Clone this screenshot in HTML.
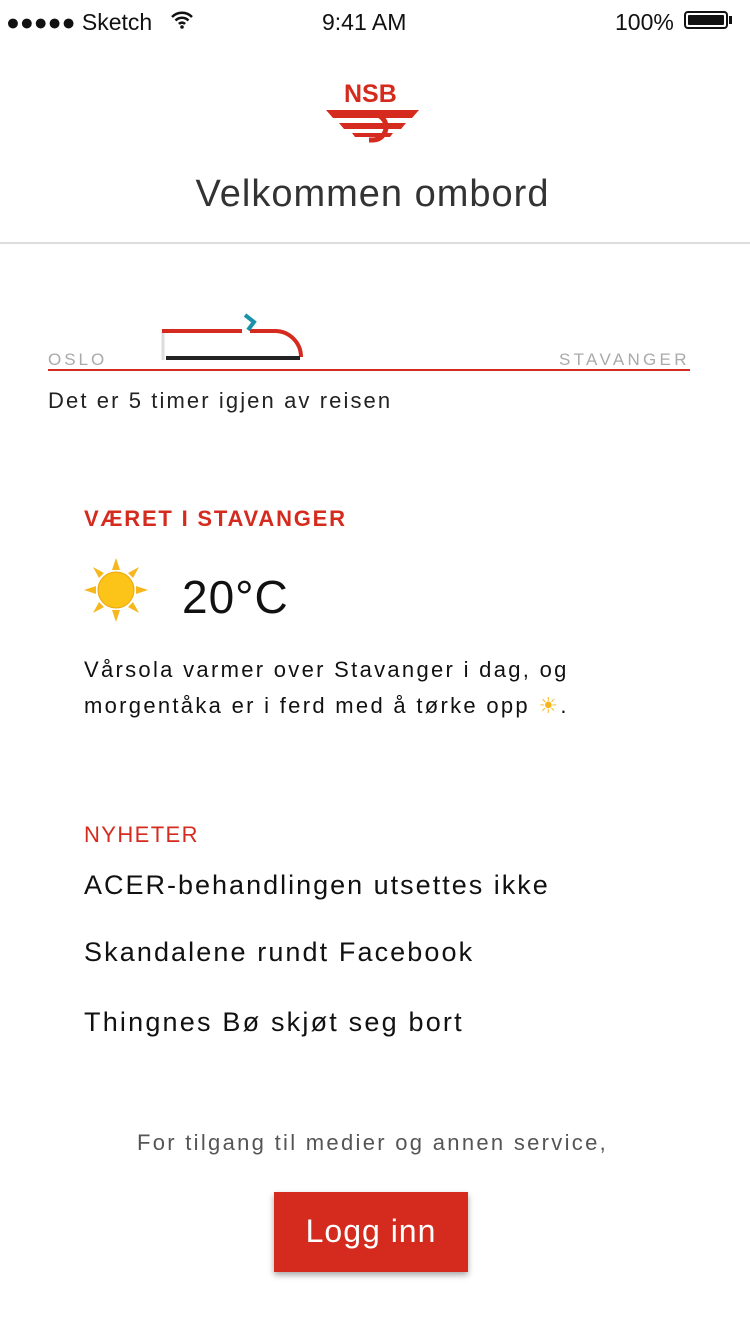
<!DOCTYPE html>
<html><head><meta charset="utf-8"><style>
body{margin:0;width:750px;height:1334px;background:#fff;font-family:"Liberation Sans",sans-serif;position:relative;overflow:hidden;color:#111}
.a{position:absolute;white-space:nowrap}
</style></head><body>
<div class="a" style="left:6px;top:9px;font-size:23px;">●●●●● Sketch</div>
<svg class="a" style="left:170px;top:10px" width="24" height="20" viewBox="0 0 24 20"><path d="M2 7a14 14 0 0 1 20 0M5.5 10.5a9 9 0 0 1 13 0M9 14a4 4 0 0 1 6 0" stroke="#111" stroke-width="2.5" fill="none"/><circle cx="12" cy="17" r="1.8" fill="#111"/></svg>
<div class="a" style="left:322px;top:9px;font-size:23px;">9:41 AM</div>
<div class="a" style="left:615px;top:9px;font-size:23px;">100%</div>
<div class="a" style="left:684px;top:11px;width:44px;height:18px;border:2px solid #111;border-radius:4px;box-sizing:border-box;padding:2px"><div style="background:#111;height:100%;border-radius:1px"></div></div>
<div class="a" style="left:729px;top:16px;width:3px;height:8px;background:#111"></div>

<div class="a" style="left:344px;top:80px;font-size:25px;font-weight:bold;color:#d52b1e">NSB</div>
<svg class="a" style="left:325px;top:108px" width="95" height="36" viewBox="0 0 95 36">
<path d="M1 2H94L87 10H8Z" fill="#d52b1e"/>
<path d="M14 15H81L76 21H19Z" fill="#d52b1e"/>
<path d="M27 25H68L65 29H30Z" fill="#d52b1e"/>
<path d="M40 6h8a13 13 0 0 1 0 26h-4" stroke="#d52b1e" stroke-width="5" fill="none"/>
</svg>
<div class="a" style="left:0;width:745px;text-align:center;top:173px;font-size:38px;color:#333;letter-spacing:1px">Velkommen ombord</div>
<div class="a" style="left:0;top:242px;width:750px;height:2px;background:#ddd"></div>

<svg class="a" style="left:150px;top:305px" width="170" height="65">
<path d="M13 25V55" stroke="#ddd" stroke-width="3"/>
<path d="M12 26H92" stroke="#d52b1e" stroke-width="4"/>
<path d="M100 26H125a26 26 0 0 1 26 26" stroke="#d52b1e" stroke-width="4" fill="none"/>
<path d="M16 53H150" stroke="#222" stroke-width="4"/>
<path d="M95 10L104 17L98 25" stroke="#1a93a8" stroke-width="4" fill="none"/>
</svg>
<div class="a" style="left:48px;top:350px;font-size:17px;color:#aaa;letter-spacing:3px">OSLO</div>
<div class="a" style="left:559px;top:350px;font-size:17px;color:#aaa;letter-spacing:3.3px">STAVANGER</div>
<div class="a" style="left:48px;top:369px;width:642px;height:2px;background:#d52b1e"></div>
<div class="a" style="left:48px;top:388px;font-size:22px;color:#222;letter-spacing:2.1px">Det er 5 timer igjen av reisen</div>

<div class="a" style="left:84px;top:506px;font-size:22px;color:#d52b1e;letter-spacing:1.8px;font-weight:bold;-webkit-text-stroke:0">VÆRET I STAVANGER</div>
<svg class="a" style="left:84px;top:558px" width="64" height="64" viewBox="0 0 64 64">
<g fill="#f5b71c"><polygon points="32,0 36,12 28,12"/><polygon points="32,64 36,52 28,52"/><polygon points="0,32 12,28 12,36"/><polygon points="64,32 52,28 52,36"/><polygon points="9,9 20,15 15,20"/><polygon points="55,55 44,49 49,44"/><polygon points="55,9 49,20 44,15"/><polygon points="9,55 15,44 20,49"/></g>
<circle cx="32" cy="32" r="18" fill="#fcc419" stroke="#e9a80e" stroke-width="1"/></svg>
<div class="a" style="left:182px;top:570px;font-size:46px;color:#111;letter-spacing:1px">20°C</div>
<div class="a" style="left:84px;top:652px;font-size:22px;line-height:36px;color:#111;letter-spacing:2.3px">Vårsola varmer over Stavanger i dag, og<br>morgentåka er i ferd med å tørke opp <span style="color:#f5b71c">☀</span>.</div>

<div class="a" style="left:84px;top:822px;font-size:22px;color:#d52b1e;letter-spacing:1.4px">NYHETER</div>
<div class="a" style="left:84px;top:870px;font-size:27px;letter-spacing:2px">ACER-behandlingen utsettes ikke</div>
<div class="a" style="left:84px;top:937px;font-size:27px;letter-spacing:2.1px">Skandalene rundt Facebook</div>
<div class="a" style="left:84px;top:1007px;font-size:27px;letter-spacing:2.2px">Thingnes Bø skjøt seg bort</div>

<div class="a" style="left:0;width:745px;text-align:center;top:1130px;font-size:22px;color:#555;letter-spacing:2.3px">For tilgang til medier og annen service,</div>
<div class="a" style="left:274px;top:1192px;width:194px;height:80px;background:#d52b1e;box-shadow:0 3px 6px rgba(0,0,0,.35);color:#fff;font-size:32px;text-align:center;line-height:78px;letter-spacing:1px">Logg inn</div>
</body></html>
